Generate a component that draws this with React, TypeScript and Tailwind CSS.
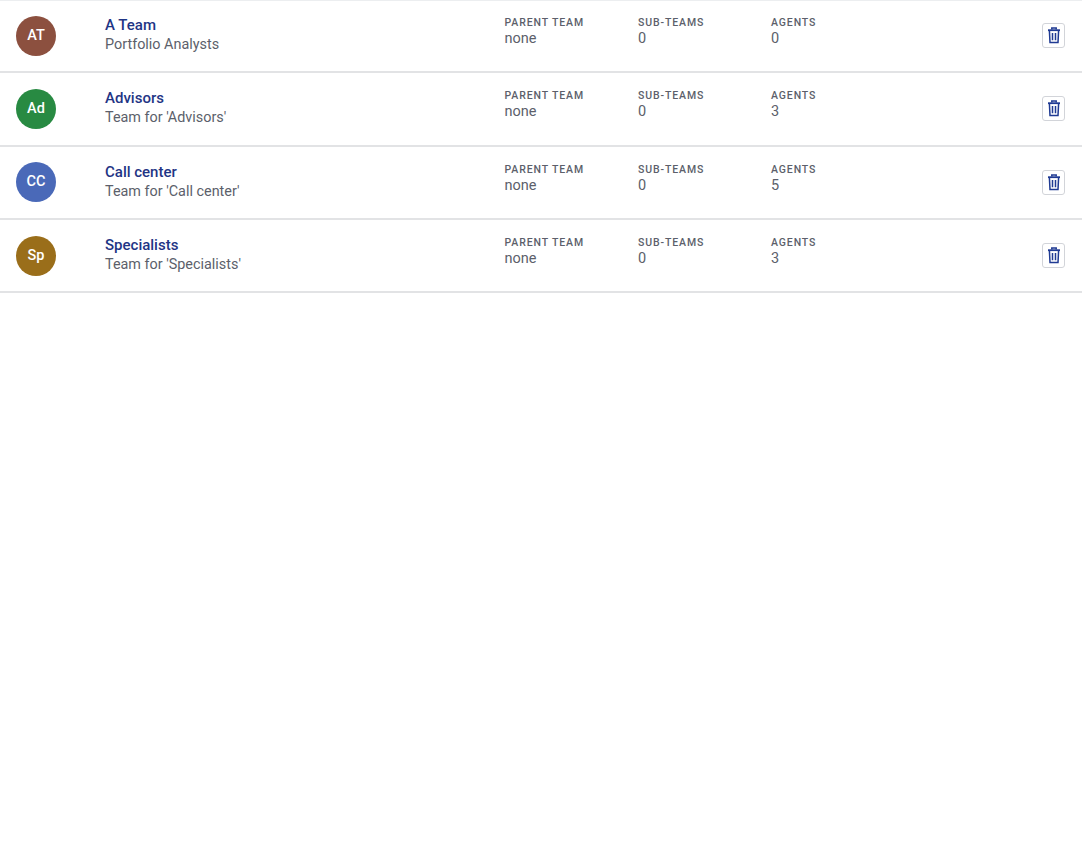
const teams = [
  { initials: "AT", color: "bg-[#8c503f]", name: "A Team", desc: "Portfolio Analysts", agents: 0 },
  { initials: "Ad", color: "bg-[#288a42]", name: "Advisors", desc: "Team for 'Advisors'", agents: 3 },
  { initials: "CC", color: "bg-[#4a69b8]", name: "Call center", desc: "Team for 'Call center'", agents: 5 },
  { initials: "Sp", color: "bg-[#9a6e1a]", name: "Specialists", desc: "Team for 'Specialists'", agents: 3 },
];

function Stat({ label, value, width }: { label: string; value: string | number; width: string }) {
  return (
    <div className={`${width} shrink-0 flex flex-col`}>
      <div className="text-[10.5px] leading-[14px] font-medium tracking-[0.085em] text-[#5c5f6b]">{label}</div>
      <div className="text-[14.5px] leading-[18px] text-[#5c5f6b]">{value}</div>
    </div>
  );
}

function Trash() {
  return (
    <svg width="14" height="17" viewBox="0 0 14 17" fill="none" stroke="#1f3a93" strokeWidth="1.5">
      <path d="M1 3.2H13" strokeWidth="1.8" />
      <path d="M4.8 2.6V1H9.2V2.6" />
      <path d="M2.4 3.6L3 15.6H11L11.6 3.6" />
      <path d="M5.5 6V13.2M8.5 6V13.2" />
    </svg>
  );
}

export default function App() {
  return (
    <div className="min-h-[844px] bg-white font-['Roboto',sans-serif]">
      {teams.map((t, i) => (
        <div key={t.name} className={`h-[73.3px] border-b-2 border-[#e2e3e5] flex items-center pl-4 pr-[17px] ${i === 0 ? "shadow-[inset_0_1px_0_#eceef0]" : ""}`}>
          <div className={`${t.color} w-10 h-10 rounded-full shrink-0 flex items-center justify-center text-white text-[14.5px] font-medium`}>
            {t.initials}
          </div>
          <div className="w-[399.5px] ml-[49px] shrink-0 -mt-[1px]">
            <div className="text-[15px] leading-[19px] font-medium text-[#1f3585]">{t.name}</div>
            <div className="text-[14.4px] leading-[19px] text-[#5c5f6b]">{t.desc}</div>
          </div>
          <div className="flex -mt-[7px]">
            <Stat label="PARENT TEAM" value="none" width="w-[133.5px]" />
            <Stat label="SUB-TEAMS" value={0} width="w-[133px]" />
            <Stat label="AGENTS" value={t.agents} width="w-[100px]" />
          </div>
          <button className="ml-auto w-[23px] h-[25px] rounded-[3px] border border-[#d2d4d9] bg-white flex items-center justify-center">
            <Trash />
          </button>
        </div>
      ))}
    </div>
  );
}
